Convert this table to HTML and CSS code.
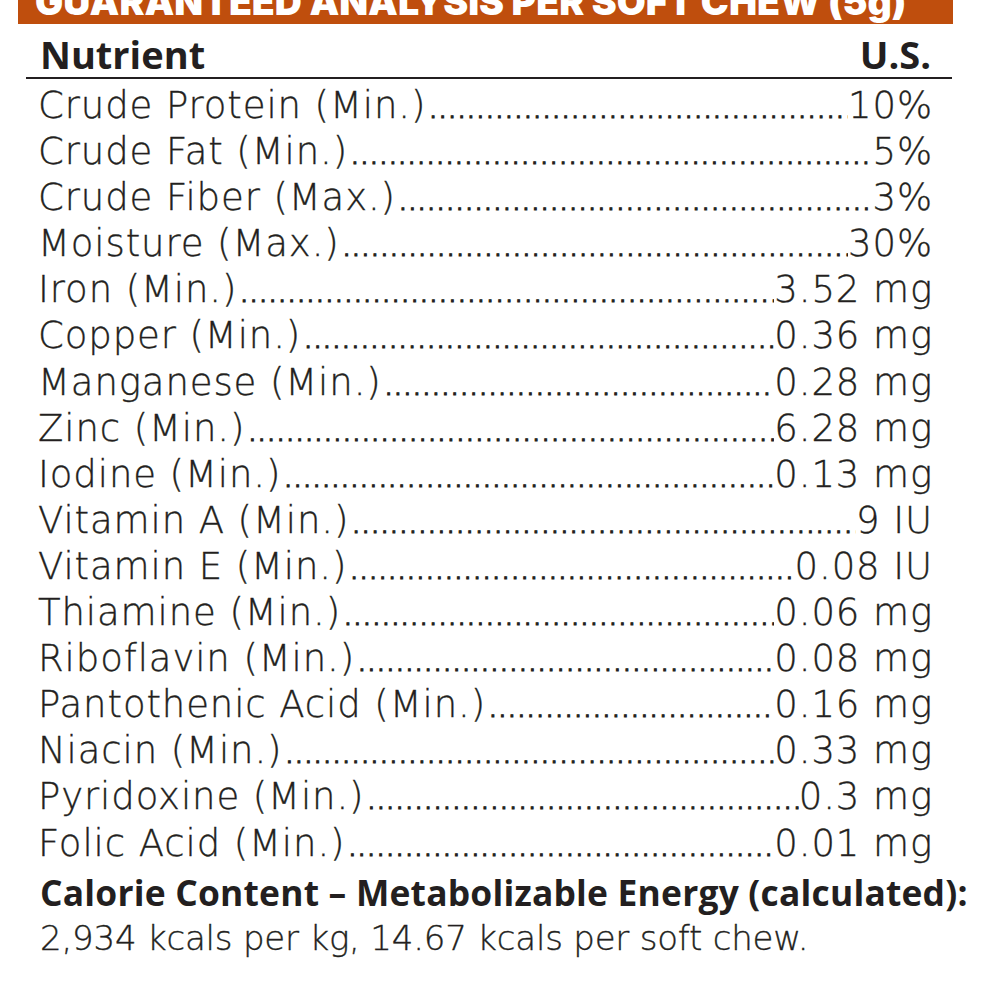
FILE: index.html
```html
<!DOCTYPE html>
<html>
<head>
<meta charset="utf-8">
<link rel="stylesheet" href="styles.css">
</head>
<body>
<div class="panel">
  <div class="banner"><span class="banner-text">GUARANTEED ANALYSIS PER SOFT CHEW (5g)</span></div>
  <div class="head-row">
    <span class="head-label">Nutrient</span>
    <span class="head-value">U.S.</span>
  </div>
  <div class="rows">
    <div class="row"><span class="label">Crude Protein (Min.)</span><span class="dots"></span><span class="value">10%</span></div>
    <div class="row"><span class="label">Crude Fat (Min.)</span><span class="dots"></span><span class="value">5%</span></div>
    <div class="row"><span class="label">Crude Fiber (Max.)</span><span class="dots"></span><span class="value">3%</span></div>
    <div class="row"><span class="label">Moisture (Max.)</span><span class="dots"></span><span class="value">30%</span></div>
    <div class="row"><span class="label">Iron (Min.)</span><span class="dots"></span><span class="value">3.52 mg</span></div>
    <div class="row"><span class="label">Copper (Min.)</span><span class="dots"></span><span class="value">0.36 mg</span></div>
    <div class="row"><span class="label">Manganese (Min.)</span><span class="dots"></span><span class="value">0.28 mg</span></div>
    <div class="row"><span class="label">Zinc (Min.)</span><span class="dots"></span><span class="value">6.28 mg</span></div>
    <div class="row"><span class="label">Iodine (Min.)</span><span class="dots"></span><span class="value">0.13 mg</span></div>
    <div class="row"><span class="label">Vitamin A (Min.)</span><span class="dots"></span><span class="value">9 IU</span></div>
    <div class="row"><span class="label">Vitamin E (Min.)</span><span class="dots"></span><span class="value">0.08 IU</span></div>
    <div class="row"><span class="label">Thiamine (Min.)</span><span class="dots"></span><span class="value">0.06 mg</span></div>
    <div class="row"><span class="label">Riboflavin (Min.)</span><span class="dots"></span><span class="value">0.08 mg</span></div>
    <div class="row"><span class="label">Pantothenic Acid (Min.)</span><span class="dots"></span><span class="value">0.16 mg</span></div>
    <div class="row"><span class="label">Niacin (Min.)</span><span class="dots"></span><span class="value">0.33 mg</span></div>
    <div class="row"><span class="label">Pyridoxine (Min.)</span><span class="dots"></span><span class="value">0.3 mg</span></div>
    <div class="row"><span class="label">Folic Acid (Min.)</span><span class="dots"></span><span class="value">0.01 mg</span></div>
  </div>
  <div class="calorie-title">Calorie Content – Metabolizable Energy (calculated):</div>
  <div class="calorie-text">2,934 kcals per kg, 14.67 kcals per soft chew.</div>
</div>
</body>
</html>
```
FILE: styles.css
```css
html, body {
  margin: 0;
  padding: 0;
  background: #ffffff;
}
body {
  width: 984px;
  height: 984px;
  overflow: hidden;
  font-family: "DejaVu Sans", sans-serif;
  color: #231f20;
}
.panel {
  display: flex;
  flex-direction: column;
}
.banner {
  margin-left: 18px;
  width: 935px;
  height: 24px;
  background: #bf4e0d;
  overflow: hidden;
  display: flex;
  align-items: flex-start;
}
.banner-text {
  display: block;
  margin-left: 17px;
  margin-top: -17px;
  color: #ffffff;
  font-family: "Inter", "Liberation Sans", sans-serif;
  font-weight: 900;
  font-size: 37.5px;
  line-height: 38px;
  white-space: nowrap;
}
.head-row {
  margin-left: 26px;
  width: 926px;
  height: 55px;
  box-sizing: border-box;
  border-bottom: 2px solid #231f20;
  display: flex;
  justify-content: space-between;
  align-items: flex-end;
  padding: 0 21px 3px 14px;
}
.head-label, .head-value {
  font-family: "Open Sans", "Liberation Sans", sans-serif;
  font-weight: 700;
  font-size: 38px;
  line-height: 40px;
}
.rows {
  display: flex;
  flex-direction: column;
  margin-left: 38px;
  width: 895px;
  margin-top: 4px;
}
.row {
  display: flex;
  align-items: stretch;
  height: 46.1px;
  font-size: 37px;
  line-height: 46px;
  font-weight: 200;
  letter-spacing: 0.9px;
  -webkit-text-stroke: 0.35px #231f20;
}
.label, .value {
  white-space: nowrap;
  flex: none;
}
.dots {
  flex: 1;
  min-width: 0;
  overflow: hidden;
  white-space: nowrap;
  letter-spacing: -2.3px;
  -webkit-text-stroke: 1.1px #231f20;
  padding-left: 1px;
}
.dots::before {
  content: "..........................................................................................................................................................";
}
.calorie-title {
  margin-left: 40px;
  margin-top: 2px;
  font-family: "Open Sans", "Liberation Sans", sans-serif;
  font-weight: 700;
  font-size: 35.4px;
  line-height: 46px;
  letter-spacing: 0.2px;
  white-space: nowrap;
}
.calorie-text {
  margin-left: 40px;
  font-weight: 200;
  font-size: 34px;
  line-height: 46px;
  letter-spacing: -0.2px;
  -webkit-text-stroke: 0.35px #231f20;
  white-space: nowrap;
}
```
